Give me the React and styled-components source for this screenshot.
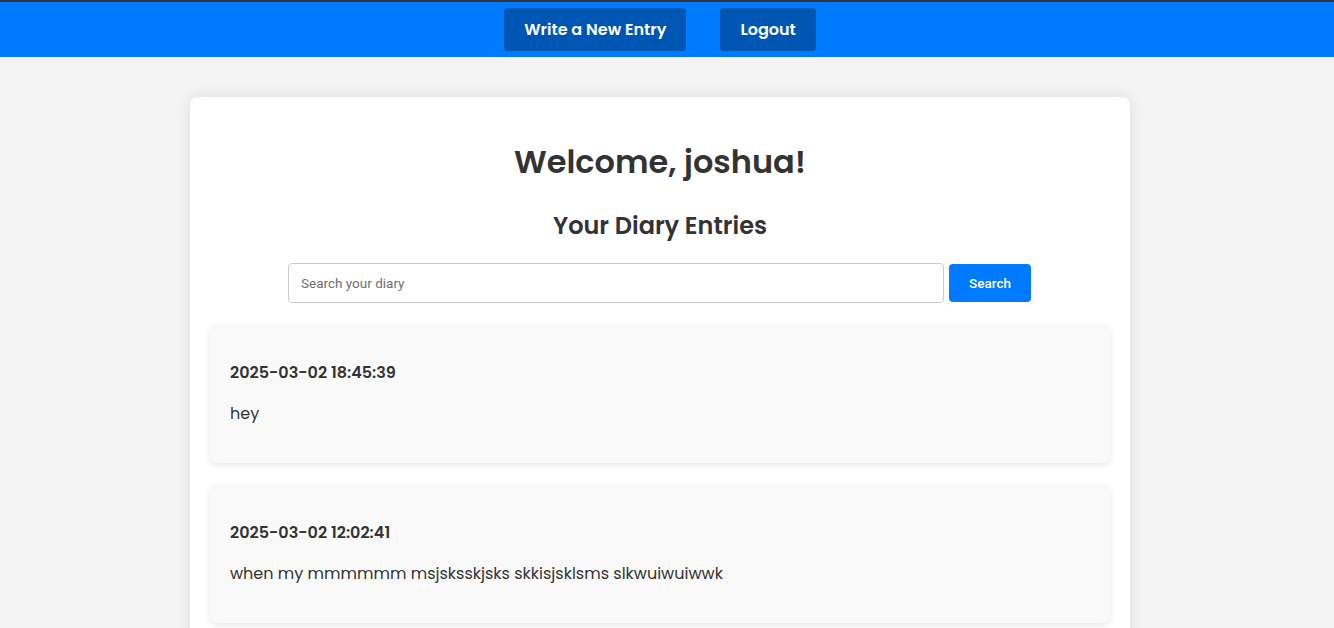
import React, { useState } from "react";
import styled, { createGlobalStyle } from "styled-components";

const GlobalStyle = createGlobalStyle`
	* {
		box-sizing: border-box;
	}
	body {
		margin: 0;
		background-color: #f4f4f4;
		font-family: "Poppins", Inter, "Noto Sans", sans-serif;
		color: #333;
	}
`;

const entries = [
	{ id: 1, date: "2025-03-02 18:45:39", text: "hey" },
	{
		id: 2,
		date: "2025-03-02 12:02:41",
		text: "when my mmmmmm msjsksskjsks skkisjsklsms slkwuiwuiwwk",
	},
];

const App = () => {
	const [query, setQuery] = useState("");

	return (
		<>
			<GlobalStyle />
			<NavBar>
				<NavButton>Write a New Entry</NavButton>
				<NavButton>Logout</NavButton>
			</NavBar>
			<Page>
				<Container>
					<Title>Welcome, joshua!</Title>
					<SubTitle>Your Diary Entries</SubTitle>
					<SearchForm onSubmit={(e) => e.preventDefault()}>
						<SearchInput
							type='text'
							placeholder='Search your diary'
							value={query}
							onChange={(e) => setQuery(e.target.value)}
						/>
						<SearchButton type='submit'>Search</SearchButton>
					</SearchForm>
					{entries.map((entry) => (
						<Entry key={entry.id}>
							<EntryDate>{entry.date}</EntryDate>
							<EntryText>{entry.text}</EntryText>
						</Entry>
					))}
				</Container>
			</Page>
		</>
	);
};

// the original page is centred on a 1320px wide area (scrollbar gutter)
const NavBar = styled.nav`
	background-color: #007bff;
	border-top: 2px solid #333;
	height: 57px;
	display: flex;
	justify-content: center;
	align-items: flex-start;
	gap: 34px;
	padding: 6px 14px 0 0;
`;

const NavButton = styled.button`
	background-color: #0056b3;
	color: #fff;
	border: none;
	border-radius: 4px;
	height: 43px;
	padding: 0 20px;
	font-family: inherit;
	font-size: 16px;
	font-weight: 600;
	cursor: pointer;
`;

const Page = styled.div`
	padding: 40px 14px 0 0;
`;

const Container = styled.main`
	width: 940px;
	margin: 0 auto;
	background-color: #fff;
	border-radius: 8px;
	box-shadow: 0 0 15px rgba(0, 0, 0, 0.1);
	padding: 20px 20px 40px;
	text-align: center;
`;

const Title = styled.h1`
	font-size: 32px;
	font-weight: 600;
	line-height: 48px;
	margin: 21px 0 22px;
`;

const SubTitle = styled.h2`
	font-size: 24px;
	font-weight: 600;
	line-height: 36px;
	margin: 20px 0 19px;
`;

const SearchForm = styled.form`
	display: flex;
	justify-content: center;
	align-items: center;
	gap: 5px;
	padding-right: 1px;
	margin-bottom: 22px;
`;

const SearchInput = styled.input`
	width: 656px;
	height: 40px;
	padding: 0 12px;
	border: 1px solid #ccc;
	border-radius: 4px;
	font-family: Roboto, "Liberation Sans", sans-serif;
	font-size: 13.5px;
	color: #333;
	&::placeholder {
		color: #6f6f6f;
	}
`;

const SearchButton = styled.button`
	width: 82px;
	height: 38px;
	border: none;
	border-radius: 4px;
	background-color: #007bff;
	color: #fff;
	font-family: Roboto, "Liberation Sans", sans-serif;
	font-size: 13.5px;
	font-weight: 500;
	cursor: pointer;
`;

const Entry = styled.div`
	background-color: #f9f9f9;
	border-radius: 8px;
	box-shadow: 0 2px 6px rgba(0, 0, 0, 0.1);
	padding: 20px;
	margin-bottom: 22px;
	text-align: left;
`;

const EntryDate = styled.p`
	font-size: 16px;
	font-weight: 600;
	line-height: 24px;
	margin: 16px 0;
`;

const EntryText = styled.p`
	font-size: 16px;
	line-height: 24px;
	margin: 17px 0;
`;

export default App;
